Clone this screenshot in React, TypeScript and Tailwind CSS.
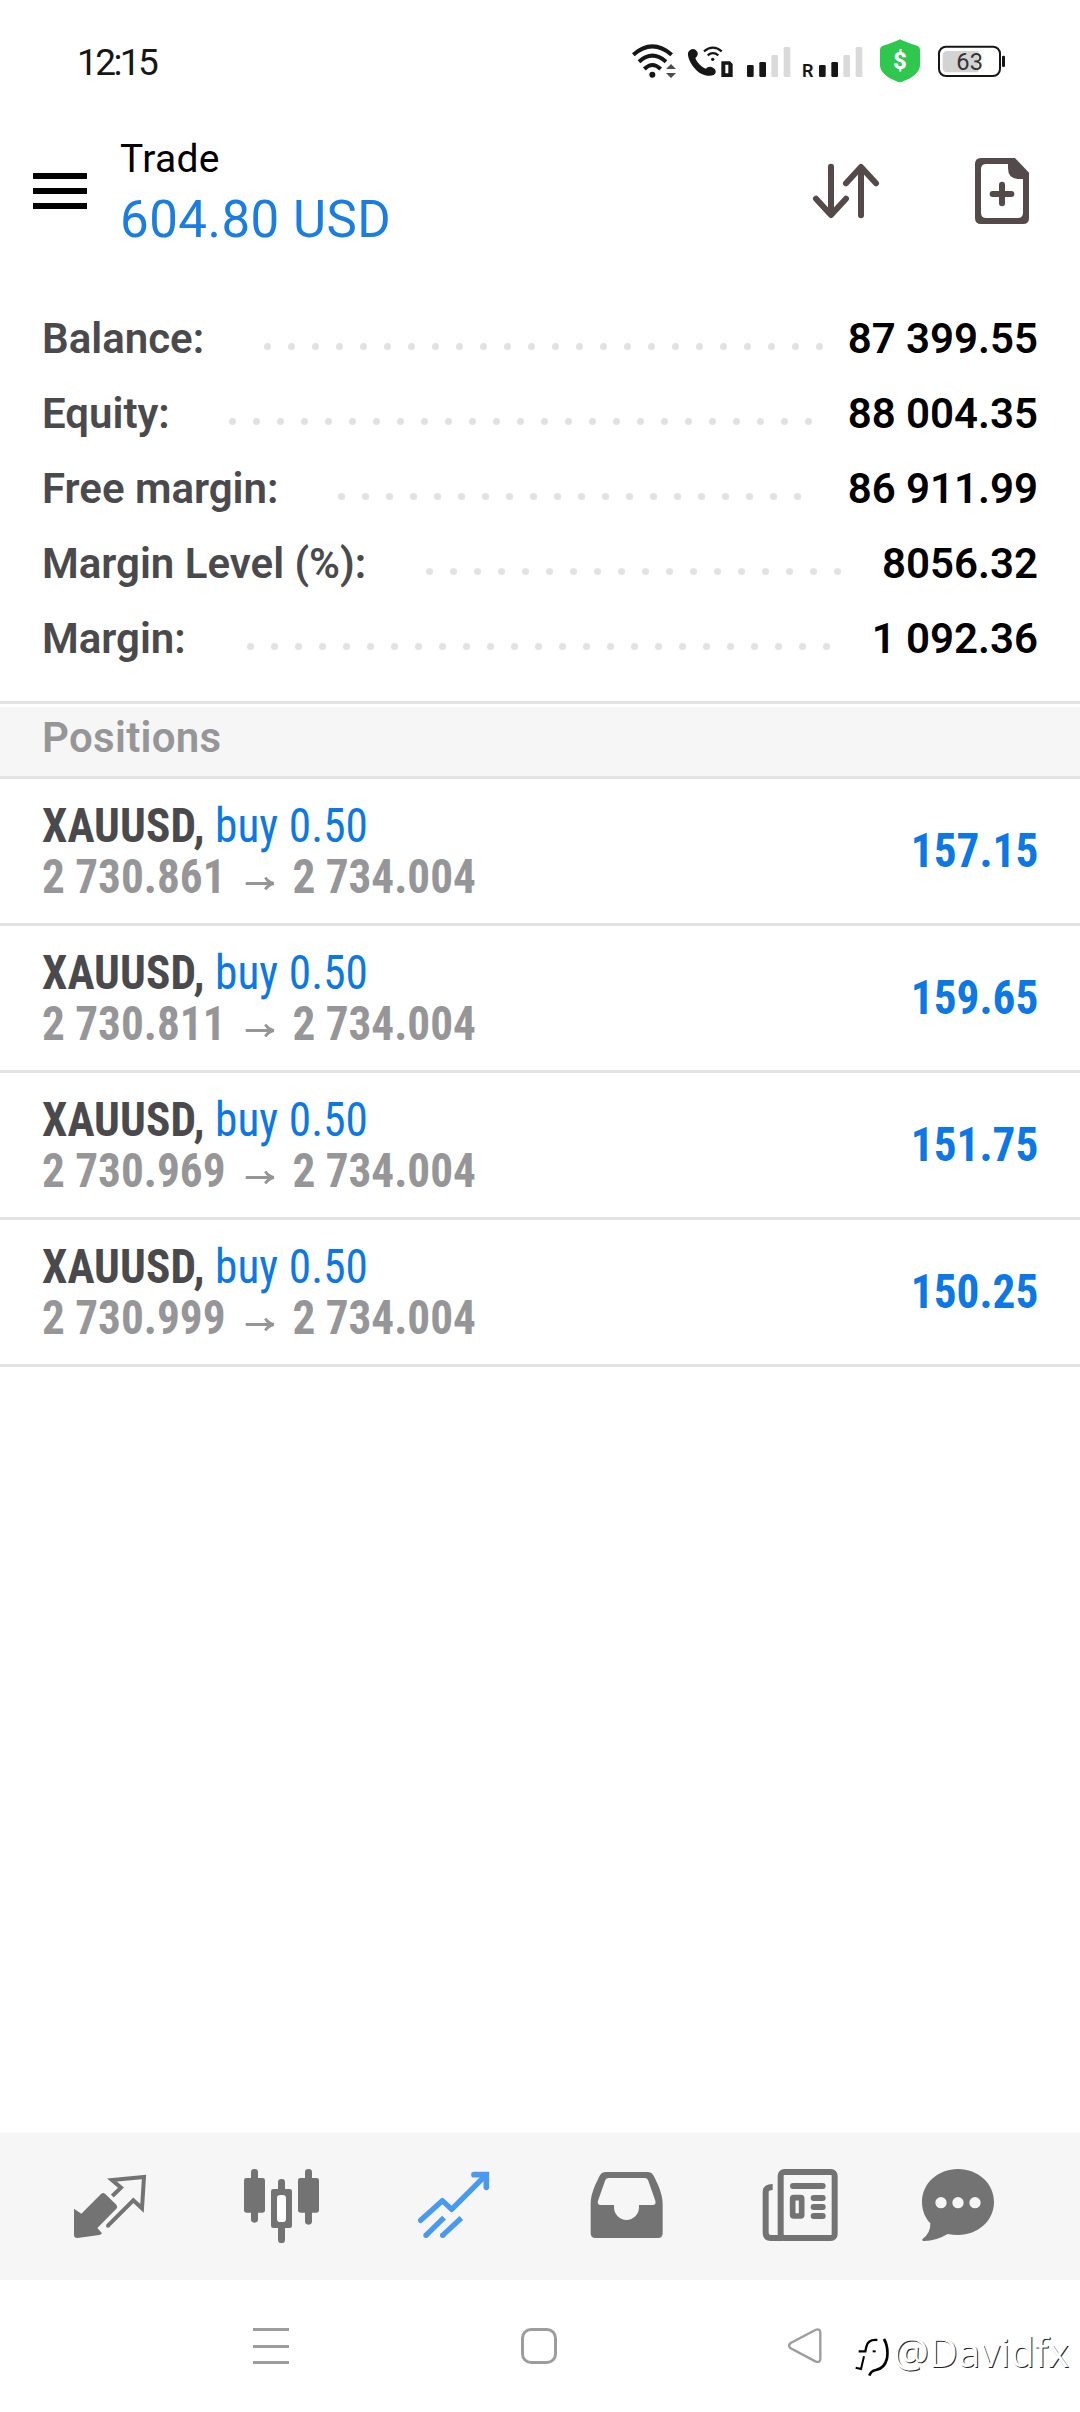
import type { ReactNode } from 'react'

const summary = [
  { label: 'Balance:', value: '87 399.55', width: 'w-[222px]', dots: 24 },
  { label: 'Equity:', value: '88 004.35', width: 'w-[187px]', dots: 25 },
  { label: 'Free margin:', value: '86 911.99', width: 'w-[296px]', dots: 20 },
  { label: 'Margin Level (%):', value: '8056.32', width: 'w-[384px]', dots: 18 },
  { label: 'Margin:', value: '1 092.36', width: 'w-[205px]', dots: 25 },
]

const positions = [
  { symbol: 'XAUUSD', side: 'buy 0.50', open: '2 730.861', current: '2 734.004', profit: '157.15' },
  { symbol: 'XAUUSD', side: 'buy 0.50', open: '2 730.811', current: '2 734.004', profit: '159.65' },
  { symbol: 'XAUUSD', side: 'buy 0.50', open: '2 730.969', current: '2 734.004', profit: '151.75' },
  { symbol: 'XAUUSD', side: 'buy 0.50', open: '2 730.999', current: '2 734.004', profit: '150.25' },
]

function SignalBars() {
  return (
    <svg className="h-[36px] w-[45px]" viewBox="438 69 135 108">
      <rect x="441" y="135" width="20" height="36" rx="4" fill="#161616" />
      <rect x="478" y="126" width="20" height="45" rx="4" fill="#161616" />
      <rect x="514" y="105" width="20" height="66" rx="4" fill="#dadada" />
      <rect x="551" y="81" width="20" height="90" rx="4" fill="#dadada" />
    </svg>
  )
}

function StatusBar() {
  return (
    <div className="flex h-[122px] items-center pl-[77px] pr-[74px]">
      <span className="pt-[3px] text-[37px] tracking-[-2.6px] text-[#161616]">12:15</span>
      <div className="ml-auto flex items-center">
        <svg className="h-[36px] w-[46px]" viewBox="93 69 138 108" fill="none" stroke="#161616" strokeWidth="12">
          <path d="M100 104Q157 54 215 104" />
          <path d="M117 125Q157 89 198 125" />
          <path d="M133 147Q157 123 182 147" />
          <circle cx="157" cy="164" r="9" fill="#161616" stroke="none" />
          <path d="M213 132l15 15h-30zM213 174l15-15h-30z" fill="#4c4c4c" stroke="none" />
        </svg>
        <svg className="ml-[10px] h-[36px] w-[47px]" viewBox="261 69 141 108" fill="none" stroke="#161616">
          <path
            d="M272 89C280 84 290 90 293 98C295 106 289 111 286 114C290 126 304 142 318 146C323 141 331 138 339 143C349 148 350 160 341 165C331 170 312 167 298 158C281 146 267 125 264 106C263 98 265 92 272 89Z"
            fill="#161616"
            stroke="none"
          />
          <path d="M312 94Q339 72 365 94" strokeWidth="7" />
          <path d="M323 106Q339 93 355 106" strokeWidth="7" />
          <circle cx="338" cy="118" r="5" fill="#161616" stroke="none" />
          <path d="M364 124h26l8 8v39h-34zM376 134v26h9v-26z" fill="#161616" stroke="none" fillRule="evenodd" />
        </svg>
        <div className="ml-[12px]">
          <SignalBars />
        </div>
        <div className="ml-[11px] flex items-end">
          <span className="w-[16px] text-[18px] leading-[17px] font-semibold text-[#161616]">R</span>
          <SignalBars />
        </div>
        <svg className="ml-[16px] h-[44px] w-[42px]" viewBox="837 60 126 132">
          <path
            d="M900 61Q908 66 953 81Q960 84 960 92V138C960 166 922 184 900 190C878 184 840 166 840 138V92Q840 84 847 81Q892 66 900 61Z"
            fill="#2dc84d"
          />
          <text x="900" y="150" textAnchor="middle" fontSize="72" fontWeight="800" fill="#fff">$</text>
        </svg>
        <svg className="ml-[16px] h-[33px] w-[69px]" viewBox="1011 78 207 99">
          <rect x="1017" y="83" width="183" height="88" rx="21" fill="none" stroke="#161616" strokeWidth="6" />
          <path d="M1042 96H1135V160H1042Q1028 160 1028 146V110Q1028 96 1042 96Z" fill="#d3d3d3" />
          <rect x="1206" y="110" width="9" height="34" rx="4" fill="#161616" />
          <text x="1109" y="153" textAnchor="middle" fontSize="71" fontWeight="400" fill="#333">63</text>
        </svg>
      </div>
    </div>
  )
}

function Header() {
  return (
    <header className="flex h-[138px] items-center pl-[33px] pr-[50px]">
      <div className="flex w-[54px] flex-col gap-[9px]">
        <div className="h-[6px] bg-black" />
        <div className="h-[6px] bg-black" />
        <div className="h-[6px] bg-black" />
      </div>
      <div className="ml-[33px] self-start pt-[14px]">
        <div className="text-[39px] leading-[46px] tracking-[0.3px] text-black">Trade</div>
        <div className="mt-[9px] text-[51px] leading-[58px] tracking-[0.5px] text-[#1a7de4]">604.80 USD</div>
      </div>
      <svg
        className="ml-auto h-[56px] w-[68px]"
        viewBox="96 99 204 168"
        fill="none"
        stroke="#544a49"
        strokeWidth="18"
        strokeLinecap="round"
        strokeLinejoin="round"
      >
        <path d="M153 110V254M108 206L153 255L198 206" />
        <path d="M243 256V112M198 160L243 111L288 160" />
      </svg>
      <svg className="ml-[94px] h-[68px] w-[56px]" viewBox="582 81 168 204">
        <path
          fill="#544a49"
          fillRule="evenodd"
          d="M603 84H705L747 128V264Q747 282 729 282H603Q585 282 585 264V102Q585 84 603 84ZM619 102Q603 102 603 118V248Q603 264 619 264H713Q729 264 729 248V147H716Q684 147 684 115V102Z"
        />
        <path d="M666 164V220M638 192H694" stroke="#544a49" strokeWidth="18" strokeLinecap="round" />
      </svg>
    </header>
  )
}

function Summary() {
  return (
    <section className="border-b-[3px] border-[#e3e3e3] px-[42px] pt-[41px] pb-[25px]">
      {summary.map((row) => (
        <div key={row.label} className="flex h-[75px] items-center text-[42px] leading-[75px] font-[650] whitespace-nowrap">
          <div className={`${row.width} text-[#4a4a4d]`}>{row.label}</div>
          <div className="flex gap-[17px] pt-[15px]">
            {Array.from({ length: row.dots }, (_, i) => (
              <div key={i} className="size-[7px] rounded-full bg-[#e2e2e2]" />
            ))}
          </div>
          <div className="ml-auto text-black">{row.value}</div>
        </div>
      ))}
    </section>
  )
}

function Positions() {
  return (
    <section>
      <div className="mt-[3px] h-[72px] border-b-[3px] border-[#e3e3e3] bg-[#f6f6f6] px-[42px] text-[42px] leading-[61px] font-[650] tracking-[0.3px] text-[#969698]">
        Positions
      </div>
      {positions.map((p) => (
        <div
          key={p.open}
          className="flex h-[147px] items-center justify-between border-b-[3px] border-[#e3e3e3] px-[42px] font-['Roboto_Condensed','Roboto'] text-[48px] leading-[51px] whitespace-nowrap [font-stretch:75%]"
        >
          <div className="origin-left scale-x-[0.942]">
            <div className="tracking-[0.1px] text-[#0b78e6]">
              <span className="font-bold text-[#4a4a4d]">{p.symbol},</span> {p.side}
            </div>
            <div className="flex font-bold text-[#969698]">
              <span>{p.open}</span>
              <svg className="mr-[18px] ml-[21px] mt-[25px] h-[15px] w-[32px]" viewBox="0 0 32 15" fill="none" stroke="#969698" strokeWidth="3">
                <path d="M0 7.500H28M21 1.500Q24 6 30 7.500Q24 9 21 13.500" />
              </svg>
              <span>{p.current}</span>
            </div>
          </div>
          <div className="origin-right scale-x-[0.942] pb-[2px] font-bold text-[#0b78e6]">{p.profit}</div>
        </div>
      ))}
    </section>
  )
}

function Tab({ viewBox, last, children }: { viewBox: string; last?: boolean; children: ReactNode }) {
  return (
    <div className={`flex justify-center ${last ? 'w-[148px]' : 'w-[172px]'}`}>
      <svg className="h-[76px] w-[80px]" viewBox={viewBox} fill="#737373">
        {children}
      </svg>
    </div>
  )
}

function TabBar() {
  return (
    <nav className="mt-auto flex h-[147px] bg-[#f6f6f6] px-[24px] pt-[35px]">
      {/* quotes */}
      <Tab viewBox="90 144 240 228">
        <path d="M102 266L124 281L183 222Q189 216 195 221L229 254Q234 260 229 266L172 324L186 340Q184 344 178 345L112 354Q102 354 102 345Z" />
        <path d="M217 228L243 203L216 180L312 171L306 265L280 241L204 317" fill="none" stroke="#737373" strokeWidth="12" />
        <circle cx="204" cy="317" r="6" />
      </Tab>
      {/* chart */}
      <Tab viewBox="606 144 240 228">
        <rect x="612" y="174" width="63" height="104" rx="7" />
        <rect x="633" y="147" width="21" height="161" rx="10" />
        <rect x="693" y="207" width="63" height="117" rx="7" />
        <rect x="714" y="177" width="21" height="192" rx="10" />
        <rect x="711" y="225" width="27" height="81" rx="10" fill="#fff" />
        <rect x="774" y="174" width="63" height="104" rx="7" />
        <rect x="795" y="147" width="21" height="167" rx="10" />
      </Tab>
      {/* trade */}
      <Tab viewBox="1122 144 240 228">
        <g fill="none" stroke="#4899f0" strokeWidth="16" strokeLinejoin="round">
          <path d="M1142 301L1207 242L1235 268L1335 168" strokeLinecap="round" />
          <path d="M1302 164H1339V202" strokeWidth="17" strokeLinecap="round" strokeLinejoin="miter" />
          <path d="M1157 347L1212 293" />
          <path d="M1207 347L1264 294" />
        </g>
        <circle cx="1158" cy="346" r="8" fill="#4899f0" />
        <circle cx="1208" cy="346" r="8" fill="#4899f0" />
      </Tab>
      {/* history */}
      <Tab viewBox="78 144 240 228">
        <path
          fillRule="evenodd"
          d="M92 250C92 220 110 185 120 166Q126 156 138 156H262Q274 156 280 166C290 185 308 220 308 250V340Q308 354 294 354H106Q92 354 92 340ZM146 174Q139 174 136 180L114 242Q111 255 122 255H162V262A37.500 38 0 0 0 237 262V255H278Q289 255 286 242L264 180Q261 174 254 174Z"
        />
      </Tab>
      {/* news */}
      <Tab viewBox="594 144 240 228">
        <g fill="none" stroke="#737373" strokeWidth="18">
          <rect x="662" y="156" width="162" height="198" rx="11" />
          <path d="M638 201Q617 201 617 216V338Q617 354 633 354H670" />
          <path d="M699 198H788M761 234H788M761 261H788M761 288H788" strokeLinecap="round" />
          <rect x="698" y="233" width="27" height="55" rx="3" strokeWidth="17" />
        </g>
      </Tab>
      {/* messages */}
      <Tab viewBox="1074 144 240 228" last>
        <path
          fillRule="evenodd"
          d="M1194 147C1254 147 1302 190 1302 246C1302 302 1254 345 1194 345Q1178 345 1163 342Q1126 364 1090 363Q1085 362 1087 358Q1112 340 1111 310C1095 294 1086 270 1086 246C1086 190 1134 147 1194 147ZM1126 248a17 17 0 1 0 34 0a17 17 0 1 0 -34 0ZM1177 248a17 17 0 1 0 34 0a17 17 0 1 0 -34 0ZM1228 248a17 17 0 1 0 34 0a17 17 0 1 0 -34 0Z"
        />
      </Tab>
    </nav>
  )
}

function SystemBar() {
  return (
    <div className="flex h-[132px] items-start pt-[48px] pl-[253px]">
      <div className="flex h-[36px] w-[36px] flex-col justify-between">
        <div className="h-[3px] bg-[#9d9d9d]" />
        <div className="h-[3px] bg-[#9d9d9d]" />
        <div className="h-[3px] bg-[#9d9d9d]" />
      </div>
      <div className="ml-[232px] size-[36px] rounded-[10px] border-[3px] border-[#9d9d9d]" />
      <svg className="ml-[230px] h-[36px] w-[36px]" viewBox="141 144 108 108" fill="none" stroke="#9d9d9d" strokeWidth="7">
        <path d="M226 150L152 189Q142 197 152 205L226 244Q241 250 241 236V158Q241 144 226 150Z" />
      </svg>
      <svg className="ml-[31px] mt-[8px] h-[42px] w-[36px]" viewBox="342 171 108 126" fill="none" stroke="#000">
        <path d="M412 183Q384 180 379 203L376 217H356" strokeWidth="7" />
        <path d="M372 232L363 270L347 266" strokeWidth="6" />
        <path d="M432 180Q446 205 441 238Q434 268 408 273Q392 276 388 290" strokeWidth="8" />
        <path d="M398 217H407" strokeWidth="6" />
      </svg>
      <span className="ml-[3px] font-['Open_Sans'] text-[40px] leading-[47px] text-white [text-shadow:1px_1px_0_#222]">@Davidfx</span>
    </div>
  )
}

export default function App() {
  return (
    <div className="flex h-[2412px] w-[1080px] flex-col bg-white font-['Roboto',sans-serif]">
      <StatusBar />
      <Header />
      <Summary />
      <Positions />
      <TabBar />
      <SystemBar />
    </div>
  )
}
